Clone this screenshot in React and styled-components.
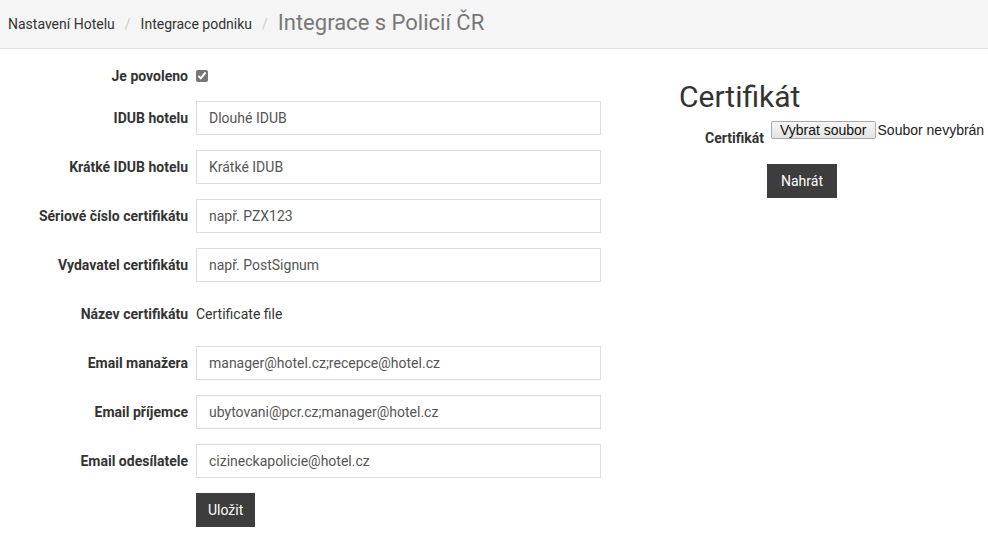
import React from "react";
import styled, { createGlobalStyle } from "styled-components";

const GlobalStyle = createGlobalStyle`
  * { box-sizing: border-box; }
  body {
    margin: 0;
    font-family: Roboto, "Liberation Sans", sans-serif;
    font-size: 14px;
    color: #333;
    background: #fff;
  }
`;

const Header = styled.div`
  height: 49px;
  background-color: #f5f5f5;
  border-bottom: 1px solid #e0e0e0;
  display: flex;
  align-items: center;
  padding: 0 8px;
  gap: 10px;
`;

const Crumb = styled.span`
  font-size: 14px;
  color: #333;
`;

const Divider = styled.span`
  color: #ccc;
  font-size: 14px;
`;

const Title = styled.h1`
  margin: 0 0 3px;
  font-size: 22px;
  font-weight: 400;
  color: #777;
`;

const Content = styled.div`
  display: grid;
  grid-template-columns: 664px 1fr;
  padding-top: 16px;
`;

const Form = styled.form`
  display: flex;
  flex-direction: column;
  gap: 15px;
`;

const Row = styled.div`
  display: grid;
  grid-template-columns: 188px 405px;
  column-gap: 8px;
  align-items: center;
  min-height: ${({ $compact }) => ($compact ? "21px" : "34px")};
`;

const Label = styled.label`
  text-align: right;
  font-weight: 700;
  font-size: 14px;
  color: #333;
`;

const Input = styled.input`
  height: 34px;
  width: 405px;
  border: 1px solid #ddd;
  padding: 0 12px;
  font-family: inherit;
  font-size: 14px;
  color: #555;
  background: #fff;
  outline: none;

  &::placeholder {
    color: #555;
  }
`;

const Check = styled.input`
  margin: 0;
  width: 12px;
  height: 12px;
  accent-color: #777;
`;

const Plain = styled.span`
  font-size: 14px;
  color: #333;
`;

const Button = styled.button`
  justify-self: start;
  height: 34px;
  padding: 0 12px;
  border: none;
  background-color: #3d3d3d;
  color: #fff;
  font-family: inherit;
  font-size: 14px;
`;

const Side = styled.div`
  padding-left: 15px;
  padding-top: 14px;
`;

const SideTitle = styled.h2`
  margin: 0 0 7px;
  font-size: 30px;
  font-weight: 400;
  color: #333;
`;

const FileRow = styled.div`
  display: flex;
  align-items: flex-start;
  padding-left: 26px;
  gap: 7px;
`;

const FileLabel = styled(Label)`
  padding-top: 9px;
`;

const FileButton = styled.span`
  display: inline-flex;
  align-items: center;
  height: 18px;
  padding: 0 8px;
  border: 1px solid #a9a9a9;
  border-radius: 2px;
  background: linear-gradient(#f6f6f6, #e3e3e3);
  font-family: "Liberation Sans", Arial, sans-serif;
  font-size: 14px;
  color: #111;
`;

const FileState = styled.span`
  font-family: "Liberation Sans", Arial, sans-serif;
  font-size: 14px;
  line-height: 18px;
  color: #222;
  margin-left: -5px;
`;

const UploadButton = styled(Button)`
  margin: 18px 0 0 88px;
  padding: 0 14px;
`;

const fields = [
  { label: "IDUB hotelu", placeholder: "Dlouhé IDUB" },
  { label: "Krátké IDUB hotelu", placeholder: "Krátké IDUB" },
  { label: "Sériové číslo certifikátu", placeholder: "např. PZX123" },
  { label: "Vydavatel certifikátu", placeholder: "např. PostSignum" },
];

const emails = [
  { label: "Email manažera", value: "manager@hotel.cz;recepce@hotel.cz" },
  { label: "Email příjemce", value: "ubytovani@pcr.cz;manager@hotel.cz" },
  { label: "Email odesílatele", value: "cizineckapolicie@hotel.cz" },
];

export default function App() {
  return (
    <>
      <GlobalStyle />
      <Header>
        <Crumb>Nastavení Hotelu</Crumb>
        <Divider>/</Divider>
        <Crumb>Integrace podniku</Crumb>
        <Divider>/</Divider>
        <Title>Integrace s Policií ČR</Title>
      </Header>
      <Content>
        <Form onSubmit={(e) => e.preventDefault()}>
          <Row $compact>
            <Label>Je povoleno</Label>
            <Check type="checkbox" defaultChecked />
          </Row>
          {fields.map((f) => (
            <Row key={f.label}>
              <Label>{f.label}</Label>
              <Input type="text" placeholder={f.placeholder} />
            </Row>
          ))}
          <Row>
            <Label>Název certifikátu</Label>
            <Plain>Certificate file</Plain>
          </Row>
          {emails.map((f) => (
            <Row key={f.label}>
              <Label>{f.label}</Label>
              <Input type="text" defaultValue={f.value} />
            </Row>
          ))}
          <Row>
            <span />
            <Button type="submit">Uložit</Button>
          </Row>
        </Form>
        <Side>
          <SideTitle>Certifikát</SideTitle>
          <FileRow>
            <FileLabel>Certifikát</FileLabel>
            <FileButton>Vybrat soubor</FileButton>
            <FileState>Soubor nevybrán</FileState>
          </FileRow>
          <UploadButton type="button">Nahrát</UploadButton>
        </Side>
      </Content>
    </>
  );
}
